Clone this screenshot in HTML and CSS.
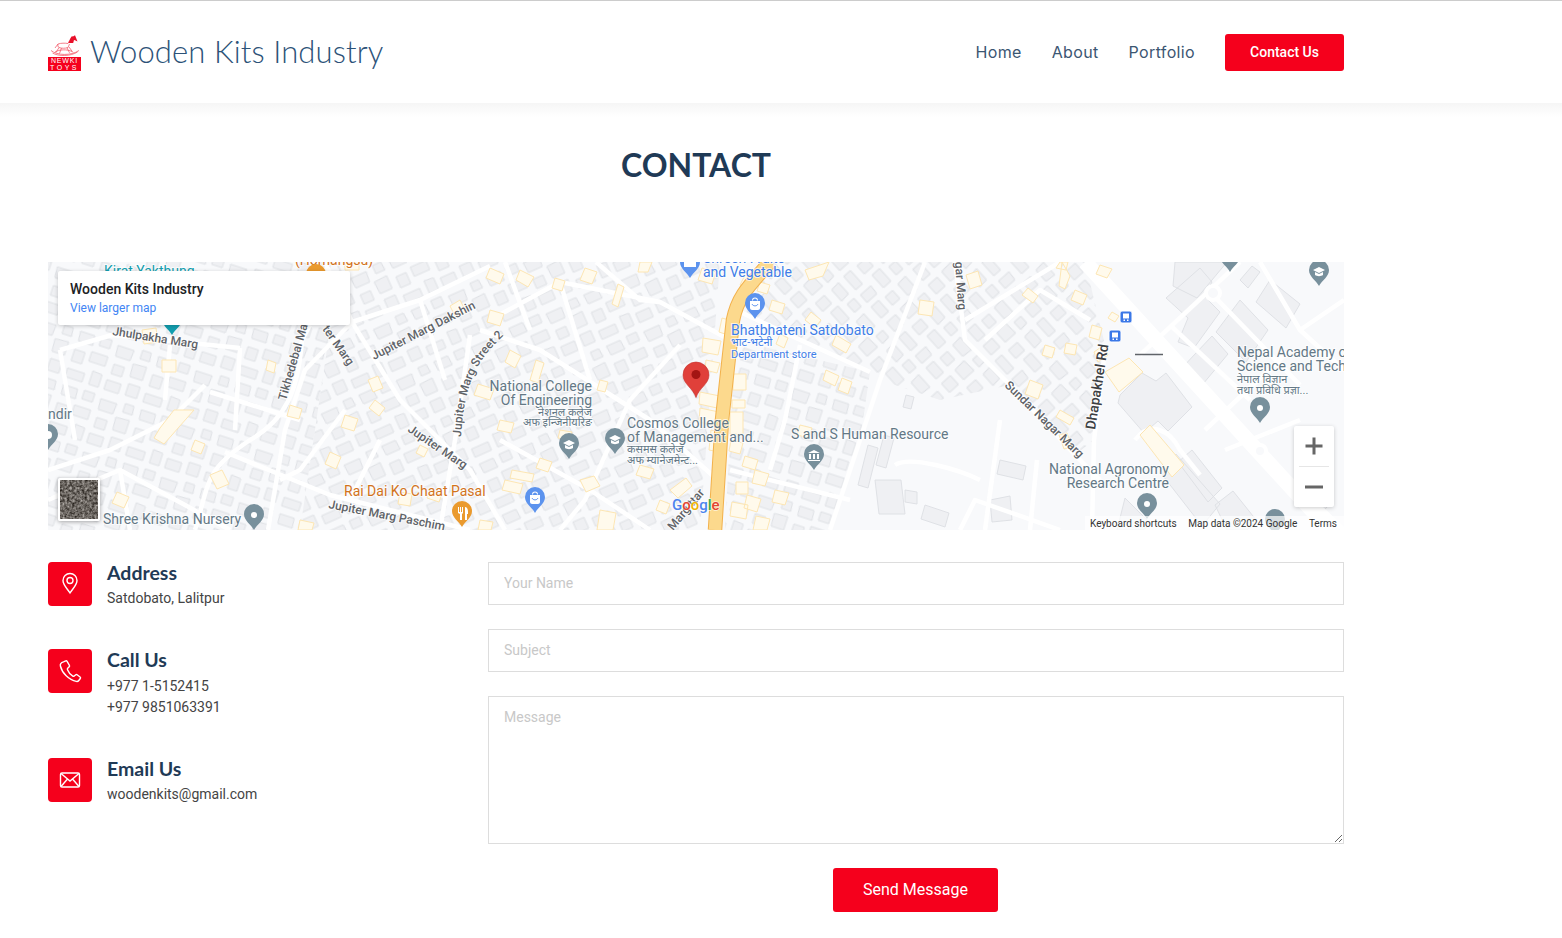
FILE: index.html
```html
<!DOCTYPE html>
<html lang="en">
<head>
  <meta charset="UTF-8" />
  <meta name="viewport" content="width=device-width, initial-scale=1" />
  <title>Contact – Wooden Kits Industry</title>
  <link rel="stylesheet" href="styles.css">
</head>
<body>
  <header class="topo">
    <div class="container topo-linha">
      <a class="marca" href="#">
        <span class="logo">
          <svg class="cavalo" viewBox="0 0 33 22" width="33" height="22">
            <path class="cavalo-traco" d="M10 9c3-1 7-1 10-.5l1.500-3M10 9c-.5 1.500 0 3 1 3.500 3 1 6 1 9 0l1.500-3.500M11 12.500l-3 5M13.500 13l-2 5.500M19 12.800l2.500 5M21 12l4 5.500M10 9L7 13M3 15.500c6 5 20 5.500 28 0M4.500 18c6 3.500 18 3.500 25-1M7 17c4-2.500 12-3 17-.5"/>
            <path class="cavalo-cheio" d="M20.500 8l1.500-4 1.500-2.500 2-.3 1.500-1 .8 2 1.700 4.300-2-.9-1.500-.6-.8 3z"/>
          </svg>
          <span class="logo-tag">
            <span>NEWKI</span>
            <span class="logo-toys">TOYS</span>
          </span>
        </span>
        <span class="marca-nome">Wooden Kits Industry</span>
      </a>
      <nav class="menu">
        <a href="#">Home</a>
        <a href="#">About</a>
        <a href="#">Portfolio</a>
        <a class="botao botao-topo" href="#">Contact Us</a>
      </nav>
    </div>
  </header>

  <main class="container">
    <h1 class="titulo">CONTACT</h1>

    <section class="mapa">
      <svg class="mapa-svg" viewBox="48 262 1296 268" width="1296" height="268">
        <defs>
          <g id="quadras">
            <path d="M3 3h15l1 10H4zM25 2h11v9H25zM43 5h17l-1 11H44zM68 2h9l1 9H68zM3 22h11v12H3zM20 19h17v10H20zM45 24h11v10H45zM63 18l14-1v14H64zM2 42h18v9H2zM27 37l10 1v13H27zM43 41h15v10H43zM65 38h12v12H65z"/>
          </g>
          <pattern id="casas-a" width="82" height="56" patternUnits="userSpaceOnUse" patternTransform="rotate(-24)">
            <use href="#quadras"/>
          </pattern>
          <pattern id="casas-b" width="82" height="56" patternUnits="userSpaceOnUse" patternTransform="rotate(18) translate(12 7)">
            <use href="#quadras"/>
          </pattern>
          <pattern id="casas-c" width="82" height="56" patternUnits="userSpaceOnUse" patternTransform="rotate(48) translate(30 11)">
            <use href="#quadras"/>
          </pattern>
          <g id="pino">
            <path d="M0 14C-3 8-10 5-10-2a10 10 0 0 1 20 0C10 5 3 8 0 14z"/>
          </g>
          <path id="curva-street" d="M461 437C463 405 468 385 477 368 485 353 496 343 508 331"/>
          <filter id="ruido" color-interpolation-filters="sRGB">
            <feTurbulence type="fractalNoise" baseFrequency="0.4" numOctaves="3" seed="4"/>
            <feColorMatrix type="matrix" values="0.8 0 0 0 0.02  0.8 0 0 0 0  0.8 0 0 0 -0.02  0 0 0 0 1"/>
          </filter>
        </defs>

        <rect class="fundo" x="48" y="262" width="1296" height="268"/>

        <!-- blocos de casas -->
        <path class="bloco-b" d="M48 262H340L300 530H48z"/>
        <path class="bloco-a" d="M340 262H720L700 530H300z"/>
        <path class="bloco-c" d="M760 262H1085L1105 345 1094 440 1075 455 1010 385 940 400 880 380 870 372 740 312z"/>
        <path class="bloco-b" d="M735 340L870 372 860 440 830 530H725z"/>

        <!-- grandes edificios da direita -->
        <g class="predios">
          <path d="M1175 262h52l-30 36-24-12zM1166 298l34-30 12 14-8 14 16 16-26 36-16-6 10-24zM1240 300l28 30-22 32-30-30zM1180 370l32-34 16 18-30 36zM1270 280l30 24-14 24-30-26z"/>
          <path d="M1120 395l22-22 14 8 10-8 26 34-24 24-10-10-14 12-26-30zM1192 450l30 38-14 14-30-40zM1215 505l18-14 24 30-10 9h-20zM1160 472l16-18 44 50-18 22zM1305 470l28 30-12 14-30-28zM1240 280l12-14 8 6-12 16z"/>
          <path d="M875 480h26l4 34h-26zM905 490l12 2v12l-12-2zM925 505l24 8-4 14-24-8zM1000 460l26 6-3 14-26-6zM990 500l20-4 2 24-20 2zM1125 498l26 26-8 6h-26zM868 445l10 3-10 40-10-3zM884 435l10 3-8 30-10-3zM906 395l8 2-3 12-8-2z"/>
        </g>

        <!-- ruas -->
        <g class="ruas">
          <path d="M195 530C210 480 205 470 250 440 285 420 298 392 302 340L310 325"/>
          <path d="M268 530L285 430 305 370 352 322 420 300 490 266"/>
          <path d="M352 322L400 400 470 470 505 530"/>
          <path d="M352 322L325 262"/>
          <path d="M470 335L455 440 440 530"/>
          <path d="M48 470L110 450 170 420 205 385"/>
          <path d="M112 335L240 348"/>
          <path d="M210 392L300 420"/>
          <path d="M225 452L330 495 470 530"/>
          <path d="M48 500L120 470 185 505 230 530"/>
          <path d="M120 470L130 530"/>
          <path d="M170 345L165 400"/>
          <path d="M240 348L235 430"/>
          <path d="M60 350L112 335"/>
          <path d="M60 350L75 440"/>
          <path d="M345 410L300 470 280 480"/>
          <path d="M380 440L350 500"/>
          <path d="M420 300L445 380"/>
          <path d="M490 320L560 282 660 302 730 340"/>
          <path d="M480 330L540 350 650 420 720 482"/>
          <path d="M596 262L640 300 660 302"/>
          <path d="M680 345L630 400 585 500 560 530"/>
          <path d="M500 440L590 490 650 530"/>
          <path d="M505 262L530 330"/>
          <path d="M560 282L590 380"/>
          <path d="M740 312L870 372"/>
          <path d="M925 262L880 380 860 440 830 530"/>
          <path d="M730 470L850 500"/>
          <path d="M800 345L785 420 770 470"/>
          <path d="M955 262L965 340 1010 385 1075 455 1100 480"/>
          <path d="M965 320L1060 262"/>
          <path d="M985 340L1040 290 1090 320"/>
          <path d="M1000 420L985 530"/>
          <path d="M895 465C910 455 960 470 980 480"/>
          <path d="M1030 530L1037 460"/>
          <path d="M960 530L975 500 1060 530"/>
          <path d="M1105 350L1094 440 1092 530"/>
          <path d="M1135 440C1150 420 1170 430 1180 450L1200 475"/>
          <path d="M1140 355L1240 262"/>
          <path d="M1170 325L1250 400"/>
          <path d="M1213 295L1300 385"/>
          <path d="M1260 262L1300 330 1344 300"/>
          <path d="M1300 330L1344 370"/>
          <path d="M1205 430L1290 350"/>
          <path d="M1225 450L1300 420"/>
          <path d="M1260 450L1344 530"/>
        </g>
        <path class="rua-larga" d="M1085 262L1330 530"/>
        <circle class="rotatoria" cx="1213" cy="293" r="7"/>
        <circle class="rotatoria" cx="1260" cy="451" r="6"/>
        <path class="traco-escuro" d="M1135 354.500h28"/>

        <!-- casas amarelas -->
        <path class="amarelas" d="M702 268l14 4-4 12-14-4zM745 275l13 7-6 10-12-7zM722 318l14 4-5 14-12-4zM703 338l18 3-3 14-16-3zM706 360l14 3-3 10-12-3zM733 374h13v16h-13zM732 400h13v8h-13zM730 412h13v22h-13zM700 392l20 4-3 12-18-4zM700 408l19 4-4 14-16-4zM711 430l5 1-2 20-5-1zM731 440l12 3-3 11-11-3zM736 482h12v12h-12zM732 502l16 3-2 14-16-3zM760 282l10 3-3 9-10-3zM772 300l13 4-3 10-13-4zM780 334l8 4-4 10-8-4zM811 312l10 8-6 8-10-8zM805 270l24-8-6 14-14 4zM826 370l13 6-4 10-12-6zM836 335l15 9-5 9-14-8zM842 378l10 4-4 12-10-4zM800 425l12 3-3 10-12-3zM745 456l13 4-3 10-13-4zM755 470l14 4-4 12-13-3zM747 495l14 4-4 13-13-4zM775 490l14 3-4 12-13-3zM756 516l14 3-3 11h-14z"/>
        <path class="amarelas" d="M490 268l14 6-4 10-14-6zM520 270l14 7-6 10-12-7zM555 278l10 3-3 10-10-3zM585 268l12 4-5 12-12-4zM618 284l6 3-6 20-6-3zM640 262h12l-4 10h-10zM490 310l14 4-4 12-13-4zM510 350l11 6-6 12-10-6zM536 360l8 3-6 20-8-3zM478 384l16 5-4 11-16-5zM500 420l14 3-3 10-14-3zM540 458l12 4-4 10-12-4zM505 480l18 4-3 10-18-4zM480 520l13 2-2 8h-13zM580 480l14-4 6 10-14 6zM600 510l16 3-3 17h-16zM640 465l14 4-4 10-14-4zM660 500l10 4-4 10-10-4zM512 470l22 4-2 8-22-4zM560 430l12 2-2 8-12-2zM600 380l8 2-3 10-8-2zM670 490l16-12 6 8-14 12z"/>
        <path class="amarelas" d="M160 428l14-18h20l-30 34-10-6zM145 270l14 3-2 14h-14zM142 330l14-2 2 14-14 2zM162 360h14v12h-14zM195 440l10 4-4 10-10-4zM210 475l12-5 7 14-12 5zM117 492l12 5-5 11-12-5zM268 360l8 3-2 10-8-3zM290 405l12 4-3 10-12-3zM345 415l13 4-4 12-13-4zM375 400l10 8-6 8-10-8zM330 452l11 5-5 12-11-5zM368 380l10-4 5 12-10 4zM300 520l14 3-2 7h-14zM400 492l12 2-2 12-12-2zM420 445l8 4-4 8-8-4zM345 262h14v8h-14zM460 300l6 12-10 6-6-12zM430 490l12 4-3 8-12-4zM302 272l10 2-2 8-10-2z"/>
        <path class="amarelas" d="M966 275l12-4 4 14-12 4zM1028 288l10 8-5 7-11-8zM1045 345l10 3-3 10-10-3zM920 300l14 2-2 14-14-2zM1060 262h8l-2 8-10-2zM1062 262l-3 24 6 3 5-13zM1075 290l12 5-4 10-12-5zM1100 265l12 4-5 9-11-4zM1112 312l7 4-4 6-7-4zM1092 325l10 3-3 12-10-3zM1066 343l11 2-2 10-11-2zM1104 345l4 10-10 7-4-10zM1105 372l24-14 14 14-24 20zM1030 380l13 5-5 14-13-5zM1060 410l14 8-4 7-14-8zM1059 435l8-2 5 14-8 2zM1140 435l10-10 34 40-12 12z"/>

        <!-- estrada principal -->
        <path class="via-borda" d="M770 262C750 285 738 295 733 320L722 420 715 530"/>
        <path class="via" d="M770 262C750 285 738 295 733 320L722 420 715 530"/>

        <!-- nomes de ruas -->
        <g class="nome-rua">
          <text transform="translate(112 335) rotate(9)">Jhulpakha Marg</text>
          <text transform="translate(286 401) rotate(-74)">Tikhedebal Ma</text>
          <text transform="translate(322 329) rotate(55)">ter Marg</text>
          <text transform="translate(374 360) rotate(-27)">Jupiter Marg Dakshin</text>
          <text><textPath href="#curva-street">Jupiter Marg Street 2</textPath></text>
          <text transform="translate(407 431) rotate(34)">Jupiter Marg</text>
          <text transform="translate(328 508) rotate(11)">Jupiter Marg Paschim</text>
          <text transform="translate(673 531) rotate(-50)">Marg ttar</text>
          <text transform="translate(955 262) rotate(86)">gar Marg</text>
          <text transform="translate(1004 386) rotate(44)">Sundar Nagar Marg</text>
          <text class="nome-rua-forte" transform="translate(1095 430) rotate(-81)">Dhapakhel Rd</text>
        </g>

        <!-- nomes de lugares -->
        <g class="lugar">
          <text x="48" y="419">ndir</text>
          <text x="103" y="524">Shree Krishna Nursery</text>
          <text class="fim" x="592" y="391">National College</text>
          <text class="fim" x="592" y="405">Of Engineering</text>
          <text class="fim lugar-mini" x="592" y="416">नेशनल कलेज</text>
          <text class="fim lugar-mini" x="592" y="426">अफ इन्जिनीयरिङ</text>
          <text x="627" y="428">Cosmos College</text>
          <text x="627" y="442">of Management and...</text>
          <text class="lugar-mini" x="627" y="453">कसमस कलेज</text>
          <text class="lugar-mini" x="627" y="464">अफ म्यानेजमेन्ट...</text>
          <text x="791" y="439">S and S Human Resource</text>
          <text class="fim" x="1169" y="474">National Agronomy</text>
          <text class="fim" x="1169" y="488">Research Centre</text>
          <text x="1237" y="357">Nepal Academy of</text>
          <text x="1237" y="371">Science and Technology</text>
          <text class="lugar-mini" x="1237" y="383">नेपाल विज्ञान</text>
          <text class="lugar-mini" x="1237" y="394">तथा प्रविधि प्रज्ञा...</text>
        </g>
        <g class="lugar-azul">
          <text x="703" y="263">Shreen Fruits</text>
          <text x="703" y="277">and Vegetable</text>
          <text x="731" y="335">Bhatbhateni Satdobato</text>
          <text class="lugar-mini" x="731" y="346">भाट-भटेनी</text>
          <text class="lugar-mini" x="731" y="358">Department store</text>
        </g>
        <g class="lugar-laranja">
          <text x="295" y="265">(Homangsu)</text>
          <text x="344" y="496">Rai Dai Ko Chaat Pasal</text>
        </g>
        <text class="lugar-teal" x="104" y="276">Kirat Yakthung</text>

        <!-- pinos -->
        <g class="pino-cinza">
          <use href="#pino" transform="translate(48 436)"/>
          <use href="#pino" transform="translate(254 516)"/>
          <use href="#pino" transform="translate(569 445)"/>
          <use href="#pino" transform="translate(615 440)"/>
          <use href="#pino" transform="translate(814 456)"/>
          <use href="#pino" transform="translate(1147 505)"/>
          <use href="#pino" transform="translate(1260 409)"/>
          <use href="#pino" transform="translate(1319 272)"/>
          <use href="#pino" transform="translate(1230 258)"/>
          <use href="#pino" transform="translate(1275 521)"/>
        </g>
        <g class="pino-azul">
          <use href="#pino" transform="translate(690 264)"/>
          <use href="#pino" transform="translate(755 305)"/>
          <use href="#pino" transform="translate(535 499)"/>
        </g>
        <use class="pino-laranja" href="#pino" transform="translate(462 513)"/>
        <use class="pino-laranja" href="#pino" transform="translate(316 276)"/>
        <use class="pino-teal" href="#pino" transform="translate(172 321)"/>

        <!-- desenho dentro dos pinos -->
        <g class="glifo">
          <circle cx="1147" cy="504" r="3"/>
          <circle cx="1260" cy="408" r="3"/>
          <circle cx="254" cy="515" r="3"/>
          <path d="M563 443l6-3 6 3-6 3zM565 445v3c2 1.500 6 1.500 8 0v-3l-4 2z"/>
          <path d="M609 438l6-3 6 3-6 3zM611 440v3c2 1.500 6 1.500 8 0v-3l-4 2z"/>
          <path d="M1313 270l6-3 6 3-6 3zM1315 272v3c2 1.500 6 1.500 8 0v-3l-4 2z"/>
          <path d="M808 453l6-3 6 3zM809 454h2v5h-2zM813 454h2v5h-2zM817 454h2v5h-2zM808 460h12v1h-12z"/>
          <path d="M750 301h10v7c0 1-1 2-2 2h-6c-1 0-2-1-2-2zM752 300.500a3 3 0 0 1 6 0h-1a2 2 0 0 0-4 0z"/>
          <path d="M530 495h10v7c0 1-1 2-2 2h-6c-1 0-2-1-2-2zM532 494.500a3 3 0 0 1 6 0h-1a2 2 0 0 0-4 0z"/>
          <path d="M684 261h12v6h-12z"/>
          <path d="M458 507h1v5h1v-5h1v5h1v-5h1v6l-1 1v6h-2v-6l-2-1zM465 507c2 0 3 2 3 5v2h-1v6h-2z"/>
          <circle cx="48" cy="435" r="4"/>
        </g>
        <g class="sorriso">
          <path d="M752 304c1 2.500 5 2.500 6 0"/>
          <path d="M532 498c1 2.500 5 2.500 6 0"/>
        </g>

        <!-- marcador vermelho -->
        <path class="marcador" d="M696 397.500C693 388 683 384 683 375a13 13 0 0 1 26 0C709 384 699 388 696 397.500z"/>
        <circle class="marcador-miolo" cx="696" cy="374.500" r="4.500"/>

        <!-- paradas de onibus -->
        <g class="onibus">
          <rect x="1120" y="311" width="12" height="12" rx="2"/>
          <rect x="1109" y="330" width="12" height="12" rx="2"/>
        </g>
        <g class="onibus-dentro">
          <path d="M1123 313.500h6v5h-6zM1123.500 319.500h1.500v1.500h-1.500zM1127 319.500h1.500v1.500H1127z"/>
          <path d="M1112 332.500h6v5h-6zM1112.500 338.500h1.500v1.500h-1.500zM1116 338.500h1.500v1.500H1116z"/>
        </g>

        <text class="google" x="672" y="510"><tspan class="g-azul">G</tspan><tspan class="g-vermelho">o</tspan><tspan class="g-amarelo">o</tspan><tspan class="g-azul">g</tspan><tspan class="g-verde">l</tspan><tspan class="g-vermelho">e</tspan></text>
      </svg>

      <div class="mapa-cartao">
        <div class="mapa-nome">Wooden Kits Industry</div>
        <a class="mapa-link" href="#">View larger map</a>
      </div>

      <div class="mapa-satelite">
        <svg width="38" height="39">
          <rect width="38" height="39" filter="url(#ruido)"/>
        </svg>
      </div>

      <div class="mapa-zoom">
        <button class="zoom-botao" type="button">
          <svg width="20" height="20" viewBox="0 0 20 20"><path d="M8.500 1.500h3v7h7v3h-7v7h-3v-7h-7v-3h7z"/></svg>
        </button>
        <div class="zoom-linha"></div>
        <button class="zoom-botao" type="button">
          <svg width="20" height="20" viewBox="0 0 20 20"><path d="M1 8.500h18v3H1z"/></svg>
        </button>
      </div>

      <div class="mapa-rodape">
        <span>Keyboard shortcuts</span>
        <span>Map data ©2024 Google</span>
        <span>Terms</span>
      </div>
    </section>

    <section class="contato">
      <div class="info">
        <div class="info-item">
          <div class="info-icone">
            <svg width="24" height="24" viewBox="0 0 24 24">
              <path d="M12 21c-2.500-4-7-8-7-12.500a7 7 0 0 1 14 0C19 13 14.500 17 12 21z"/>
              <circle cx="12" cy="8.500" r="3"/>
            </svg>
          </div>
          <div>
            <h3>Address</h3>
            <p>Satdobato, Lalitpur</p>
          </div>
        </div>
        <div class="info-item">
          <div class="info-icone">
            <svg width="24" height="24" viewBox="0 0 24 24">
              <path d="M5.500 2.800l2.300-.9c.5-.2 1 0 1.300.5l2.300 4c.3.500.2 1-.2 1.400L9.700 9.300c-.4.400-.4.900-.2 1.400 1 2.600 3 5 5.300 6.400.5.300 1 .3 1.400-.1l1.600-1.300c.4-.3.900-.3 1.300 0l3 2.300c.5.400.6 1 .2 1.500l-1.500 2c-.6.800-1.500 1.100-2.500.9C11 21 4 14 2.400 7c-.4-1.800 1-3.500 3.100-4.200z"/>
            </svg>
          </div>
          <div class="info-call">
            <h3>Call Us</h3>
            <p>+977 1-5152415</p>
            <p>+977 9851063391</p>
          </div>
        </div>
        <div class="info-item">
          <div class="info-icone">
            <svg width="24" height="24" viewBox="0 0 24 24">
              <rect x="2.500" y="5" width="19" height="14" rx="1.500"/>
              <path d="M3 5.500l9 7.500 9-7.500M3 18.500l6.500-7.500M21 18.500L14.500 11"/>
            </svg>
          </div>
          <div>
            <h3>Email Us</h3>
            <p>woodenkits@gmail.com</p>
          </div>
        </div>
      </div>

      <form class="formulario">
        <input class="campo" type="text" placeholder="Your Name">
        <input class="campo" type="text" placeholder="Subject">
        <textarea class="campo campo-msg" placeholder="Message"></textarea>
        <button class="botao botao-enviar" type="button">Send Message</button>
      </form>
    </section>
  </main>
</body>
</html>
```

FILE: styles.css
```css
* {
  box-sizing: border-box;
}
body {
  margin: 0;
  font-family: "Roboto", "Liberation Sans", sans-serif;
  font-size: 14px;
  color: #444;
  background: #fff;
  border-top: 1px solid #ccc;
  background-image: linear-gradient(#f5f5f5, #fff);
  background-size: 100% 15px;
  background-position: 0 102px;
  background-repeat: no-repeat;
}
a {
  text-decoration: none;
}
.container {
  width: 1296px;
  margin-left: 48px;
}
.topo {
  background: #fff;
  height: 102px;
}
.topo-linha {
  height: 100%;
  display: flex;
  align-items: center;
  justify-content: space-between;
}
.marca {
  display: flex;
  align-items: center;
  gap: 9px;
}
.logo {
  display: flex;
  flex-direction: column;
  width: 33px;
  height: 36px;
  margin-top: 1px;
}
.cavalo {
  display: block;
}
.cavalo-traco {
  fill: none;
  stroke: #f04a5c;
  stroke-width: 0.7;
}
.cavalo-cheio {
  fill: #e8102a;
}
.logo-tag {
  height: 14px;
  background: #f5001c;
  color: #fff;
  font-family: "Liberation Sans", sans-serif;
  font-size: 7px;
  line-height: 7px;
  letter-spacing: 0.8px;
  text-align: center;
  display: flex;
  flex-direction: column;
  justify-content: center;
}
.logo-toys {
  letter-spacing: 2.500px;
}
.marca-nome {
  font-family: "Lato", sans-serif;
  font-weight: 300;
  font-size: 31px;
  line-height: 34px;
  margin-top: -3px;
  color: #2c5278;
  letter-spacing: 0.1px;
}
.menu {
  display: flex;
  align-items: center;
  gap: 30px;
}
.menu a {
  font-family: "Inter", sans-serif;
  font-size: 16px;
  letter-spacing: 0.35px;
  margin-top: -1px;
  color: #3b5672;
}
.menu .botao-topo {
  font-family: "Roboto", sans-serif;
  font-size: 14px;
  font-weight: 500;
  letter-spacing: 0;
  margin-top: 0;
  color: #fff;
  width: 119px;
  height: 37px;
  display: flex;
  align-items: center;
  justify-content: center;
}
.botao {
  background: #f5001c;
  color: #fff;
  border: 0;
  border-radius: 3px;
}

.titulo {
  margin: 0;
  padding-top: 42px;
  height: 159px;
  text-align: center;
  font-family: "Lato", sans-serif;
  font-weight: 700;
  font-size: 32px;
  line-height: 40px;
  color: #1f3a56;
}

.mapa {
  position: relative;
  height: 268px;
  overflow: hidden;
}
.mapa-svg {
  display: block;
}
.fundo {
  fill: #f8f9fb;
}
.bloco-a {
  fill: url(#casas-a);
}
.bloco-b {
  fill: url(#casas-b);
}
.bloco-c {
  fill: url(#casas-c);
}
#quadras path {
  fill: #eff0f3;
  stroke: #dcdfe3;
  stroke-width: 0.9;
}
.predios path {
  fill: #eff0f3;
  stroke: #dcdfe3;
  stroke-width: 0.9;
}
.ruas path {
  fill: none;
  stroke: #fff;
  stroke-width: 4.500;
  stroke-linejoin: round;
}
.rua-larga {
  fill: none;
  stroke: #fff;
  stroke-width: 15;
}
.rotatoria {
  fill: #f8f9fb;
  stroke: #fff;
  stroke-width: 4;
}
.traco-escuro {
  stroke: #5f6368;
  stroke-width: 1.500;
}
.amarelas {
  fill: #fffaec;
  stroke: #fde6b3;
  stroke-width: 1;
}
.via-borda {
  fill: none;
  stroke: #f2b14c;
  stroke-width: 14.500;
}
.via {
  fill: none;
  stroke: #fcd98d;
  stroke-width: 12.500;
}
.mapa-svg text {
  font-family: "Roboto", "Noto Sans", sans-serif;
  font-size: 14px;
  paint-order: stroke;
  stroke: #fff;
  stroke-width: 2px;
  stroke-opacity: 0.7;
}
.nome-rua text {
  fill: #5f6368;
  font-size: 12px;
  font-weight: 500;
}
.mapa-svg .nome-rua-forte {
  fill: #3c4043;
  font-size: 14px;
}
.lugar text {
  fill: #637886;
}
.lugar-azul text {
  fill: #3f7ee8;
}
.lugar-laranja text {
  fill: #d2731c;
}
.lugar-teal {
  fill: #129eaf;
}
.mapa-svg .lugar-mini {
  font-size: 11px;
}
.fim {
  text-anchor: end;
}
.pino-cinza {
  fill: #78909c;
}
.pino-azul {
  fill: #5c93ee;
}
.pino-laranja {
  fill: #ea9a2e;
}
.pino-teal {
  fill: #129eaf;
}
.glifo {
  fill: #fff;
}
.sorriso path {
  fill: none;
  stroke: #5c93ee;
  stroke-width: 1;
}
.marcador {
  fill: #e0403a;
  stroke: #c5302b;
  stroke-width: 0.6;
}
.marcador-miolo {
  fill: #a31513;
}
.onibus rect {
  fill: #3b78e7;
  stroke: #fff;
  stroke-width: 1;
}
.onibus-dentro {
  fill: #fff;
}
.mapa-svg .google {
  font-size: 15px;
  font-weight: 500;
  stroke-width: 1.500px;
}
.g-azul {
  fill: #4c84ee;
}
.g-vermelho {
  fill: #e3452f;
}
.g-amarelo {
  fill: #f0b400;
}
.g-verde {
  fill: #34a853;
}
.mapa-cartao {
  position: absolute;
  left: 10px;
  top: 9px;
  width: 292px;
  height: 54px;
  padding: 9px 12px;
  background: #fff;
  box-shadow: 0 1px 4px rgba(0, 0, 0, 0.2);
  border-radius: 2px;
}
.mapa-nome {
  font-size: 14px;
  font-weight: 500;
  color: #202124;
  line-height: 18px;
}
.mapa-link {
  display: block;
  font-size: 12px;
  line-height: 21px;
  color: #4285f4;
}
.mapa-satelite {
  position: absolute;
  left: 10px;
  top: 216px;
  width: 42px;
  height: 43px;
  border: 2px solid #fff;
  border-radius: 2px;
  box-shadow: 0 1px 4px rgba(0, 0, 0, 0.35);
}
.mapa-satelite svg {
  display: block;
}
.mapa-zoom {
  position: absolute;
  right: 10px;
  top: 164px;
  width: 40px;
  height: 81px;
  background: #fff;
  border-radius: 2px;
  box-shadow: 0 1px 4px rgba(0, 0, 0, 0.2);
  display: flex;
  flex-direction: column;
  align-items: center;
}
.zoom-botao {
  width: 40px;
  height: 40px;
  padding: 0;
  border: 0;
  background: none;
  display: flex;
  align-items: center;
  justify-content: center;
}
.zoom-botao svg {
  fill: #666;
}
.zoom-linha {
  width: 30px;
  height: 1px;
  background: #e6e6e6;
}
.mapa-rodape {
  position: absolute;
  right: 0;
  bottom: 0;
  height: 14px;
  width: 259px;
  padding: 0 7px 0 5px;
  display: flex;
  justify-content: space-between;
  align-items: center;
  font-size: 10px;
  color: #333;
  background: rgba(255, 255, 255, 0.7);
}

.contato {
  display: flex;
  margin-top: 32px;
}
.info {
  width: 440px;
}
.info-item {
  display: flex;
  gap: 15px;
  margin-bottom: 40px;
}
.info-icone {
  width: 44px;
  height: 44px;
  flex: none;
  background: #f5001c;
  border-radius: 4px;
  display: flex;
  align-items: center;
  justify-content: center;
}
.info-icone svg {
  fill: none;
  stroke: #fff;
  stroke-width: 1.400;
}
.info h3 {
  margin: 0 0 5px;
  font-family: "Lato", sans-serif;
  font-weight: 700;
  font-size: 19.500px;
  line-height: 21px;
  color: #1f3a56;
}
.info .info-call h3 {
  margin-bottom: 6px;
}
.info p {
  margin: 0;
  font-size: 14px;
  line-height: 21px;
  color: #444;
}
.formulario {
  width: 856px;
  display: flex;
  flex-direction: column;
  align-items: center;
  gap: 24px;
}
.campo {
  display: block;
  width: 100%;
  height: 43px;
  padding: 0 15px 2px;
  border: 1px solid #ddd;
  font-family: "Roboto", sans-serif;
  font-size: 14px;
  color: #444;
  outline: 0;
}
.campo::placeholder {
  color: #c8c8c8;
}
.campo-msg {
  height: 148px;
  padding-top: 12px;
}
.botao-enviar {
  width: 165px;
  height: 44px;
  margin-right: 1px;
  padding-bottom: 2px;
  font-family: "Roboto", sans-serif;
  font-size: 16px;
}
```
